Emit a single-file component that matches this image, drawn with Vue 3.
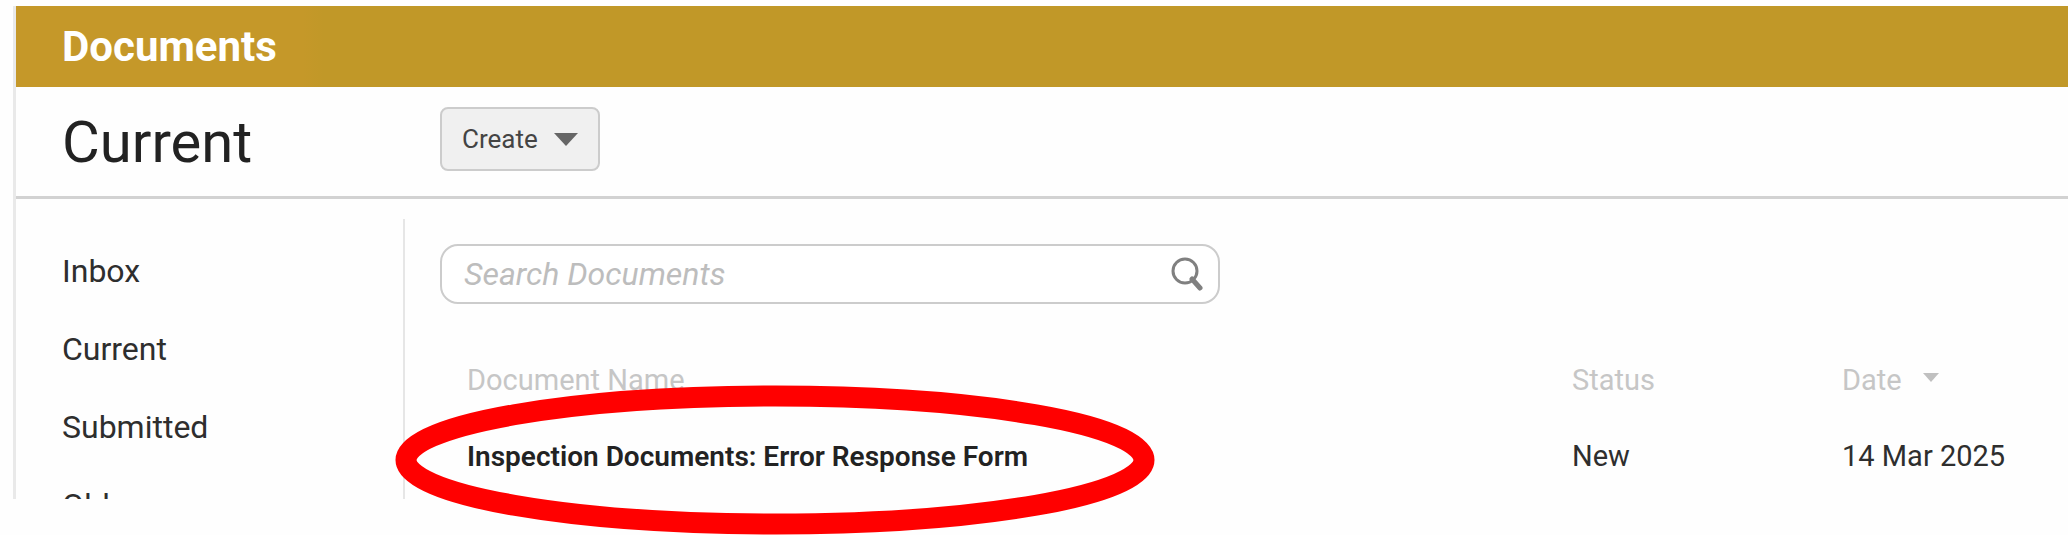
<template>
  <div class="page">
    <div class="panel">
      <header class="banner">Documents</header>

      <div class="toolbar">
        <h1 class="title">{{ current }}</h1>
        <button type="button" class="create">
          Create
          <svg class="caret" viewBox="0 0 24 13" aria-hidden="true">
            <path d="M0 0h24L12 13z" />
          </svg>
        </button>
      </div>

      <div class="body">
        <nav class="sidebar">
          <a v-for="folder in folders" v-bind:key="folder" href="#" v-on:click.prevent="current = folder">
            {{ folder }}
          </a>
        </nav>

        <main class="content">
          <form class="search" v-on:submit.prevent>
            <input v-model="query" type="text" placeholder="Search Documents" aria-label="Search Documents" />
            <button type="submit" class="searchBtn" aria-label="Search">
              <svg viewBox="0 0 32 34" aria-hidden="true">
                <path d="M21 22l8 9" stroke-width="5" stroke-linecap="round" />
                <circle cx="14" cy="14" r="12" stroke-width="3" />
              </svg>
            </button>
          </form>

          <table class="documents">
            <colgroup>
              <col />
              <col class="colStatus" />
              <col class="colDate" />
            </colgroup>
            <thead>
              <tr>
                <th>Document Name</th>
                <th>Status</th>
                <th>
                  Date
                  <svg class="sort" viewBox="0 0 16 9" aria-hidden="true">
                    <path d="M0 0h16L8 9z" />
                  </svg>
                </th>
              </tr>
            </thead>
            <tbody>
              <tr v-for="doc in documents" v-bind:key="doc.name">
                <td class="name">
                  <a href="#">{{ doc.name }}</a>
                  <svg v-if="doc.marked" class="marker" viewBox="0 0 760 150" aria-hidden="true">
                    <ellipse cx="380" cy="75" rx="369" ry="64" />
                  </svg>
                </td>
                <td>{{ doc.status }}</td>
                <td>{{ doc.date }}</td>
              </tr>
            </tbody>
          </table>
        </main>
      </div>
    </div>
  </div>
</template>

<script setup>
import { ref } from 'vue'

const current = ref('Current')
const query = ref('')

const folders = ['Inbox', 'Current', 'Submitted', 'Older']

const documents = [
  {
    name: 'Inspection Documents: Error Response Form',
    status: 'New',
    date: '14 Mar 2025',
    marked: true
  }
]
</script>

<style>
body {
  margin: 0;
  background: #fefefe;
}
</style>

<style scoped>
.page {
  padding: 6px 0 36px 13px;
  font-family: Roboto, "Liberation Sans", sans-serif;
  font-size: 32px;
  line-height: 40px;
  color: #2e2e2e;
}
.panel {
  border-left: 3px solid #e9e9e9;
}
.banner {
  padding: 17px 46px 16px;
  background: linear-gradient(90deg, #c59829 14%, #c19828 15%);
  color: white;
  font-size: 42px;
  font-weight: 700;
  line-height: 48px;
}
.toolbar {
  display: flex;
  align-items: center;
  height: 109px;
  border-bottom: 3px solid #d2d2d2;
}
.title {
  width: 378px;
  margin: 0;
  padding-left: 46px;
  font-size: 58px;
  font-weight: 400;
  line-height: 64px;
  color: #222;
}
.create {
  display: flex;
  align-items: center;
  gap: 16px;
  height: 64px;
  margin-bottom: 5px;
  padding: 0 20px;
  border: 2px solid #ccc;
  border-radius: 8px;
  background: #f0f0f0;
  color: #444;
  font: inherit;
  font-size: 26px;
}
.caret {
  width: 24px;
  height: 13px;
  fill: #666;
}
.body {
  display: flex;
}
.sidebar {
  flex: none;
  display: flex;
  flex-direction: column;
  gap: 38px;
  box-sizing: border-box;
  width: 387px;
  height: 300px;
  padding: 52px 0 0 46px;
  overflow: hidden;
}
.sidebar a {
  color: inherit;
  text-decoration: none;
}
.content {
  flex: 1;
  margin-top: 20px;
  padding: 25px 0 0 35px;
  border-left: 2px solid #e6e6e6;
}
.search {
  position: relative;
  max-width: 780px;
}
.search input {
  box-sizing: border-box;
  width: 100%;
  height: 60px;
  padding: 0 80px 0 22px;
  border: 2px solid #ccc;
  border-radius: 18px;
  background: white;
  color: inherit;
  font: inherit;
  font-style: italic;
}
.search input::placeholder {
  color: #bdbdbd;
  opacity: 1;
}
.searchBtn {
  position: absolute;
  top: 13px;
  right: 17px;
  padding: 0;
  border: 0;
  background: none;
}
.searchBtn svg {
  display: block;
  width: 32px;
  height: 34px;
  fill: none;
  stroke: #808080;
}
.documents {
  width: 100%;
  margin-top: 38px;
  border-spacing: 0;
  table-layout: fixed;
  font-size: 29px;
}
.colStatus {
  width: 270px;
}
.colDate {
  width: 253px;
}
.documents th,
.documents td {
  height: 76px;
  padding: 0 0 0 27px;
  text-align: left;
  white-space: nowrap;
}
.documents th {
  color: #c6c6c6;
  font-weight: 400;
}
.sort {
  width: 16px;
  height: 9px;
  margin-left: 14px;
  vertical-align: 8px;
  fill: #c0c0c0;
}
.name {
  position: relative;
}
.name a {
  color: #222;
  font-size: 28px;
  font-weight: 600;
  text-decoration: none;
}
/* red ring drawn over the highlighted document */
.marker {
  position: absolute;
  top: 50%;
  left: -45px;
  width: 760px;
  height: 150px;
  margin-top: -71px;
  fill: none;
  stroke: #ff0000;
  stroke-width: 21px;
  pointer-events: none;
}
</style>
